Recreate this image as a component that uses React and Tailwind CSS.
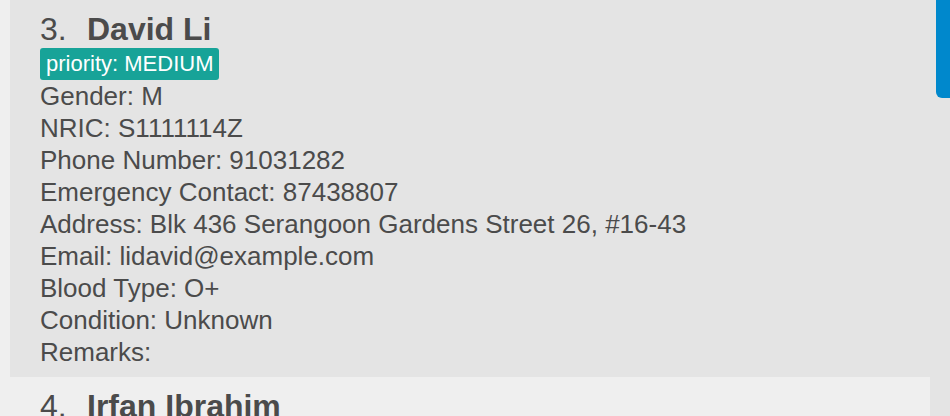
import React from 'react';

const fields = [
    ['Gender', 'M'],
    ['NRIC', 'S1111114Z'],
    ['Phone Number', '91031282'],
    ['Emergency Contact', '87438807'],
    ['Address', 'Blk 436 Serangoon Gardens Street 26, #16-43'],
    ['Email', 'lidavid@example.com'],
    ['Blood Type', 'O+'],
    ['Condition', 'Unknown'],
    ['Remarks', ''],
];

const PersonCard = ({ index, name, priority, details, selected }) => {
    return (
        <div className={`${selected ? 'bg-[#e4e4e4]' : 'bg-[#efefef]'} pl-[30px] pt-[8px] pb-[9px] text-[#4b4b4b]`}>
            <div className="flex items-center h-[40px] text-[32px] leading-[40px] pt-[2px]">
                <span className="w-[47px]">{index}.</span>
                <span className="font-bold">{name}</span>
            </div>
            {priority && (
                <div className="flex">
                    <span className="bg-[#17a398] text-white text-[22px] leading-[32px] h-[32px] px-[6px] rounded-[3px]">
                        priority: {priority}
                    </span>
                </div>
            )}
            {details && details.map(([label, value]) => (
                <div key={label} className="text-[26px] leading-[32px] h-[32px]">
                    {label}: {value}
                </div>
            ))}
        </div>
    );
};

export default function App() {
    return (
        <div className="w-[950px] h-[416px] overflow-hidden flex bg-[#efefef]" style={{ fontFamily: '"Liberation Sans", Arial, sans-serif' }}>
            <div className="flex-1 pl-[10px] flex flex-col">
                <PersonCard index={3} name="David Li" priority="MEDIUM" details={fields} selected />
                <PersonCard index={4} name="Irfan Ibrahim" />
            </div>
            <div className="w-[20px] bg-[#e4e4e4] flex justify-end">
                <div className="w-[14px] h-[98px] bg-[#0088cc] rounded-bl-[6px]" />
            </div>
        </div>
    );
}
